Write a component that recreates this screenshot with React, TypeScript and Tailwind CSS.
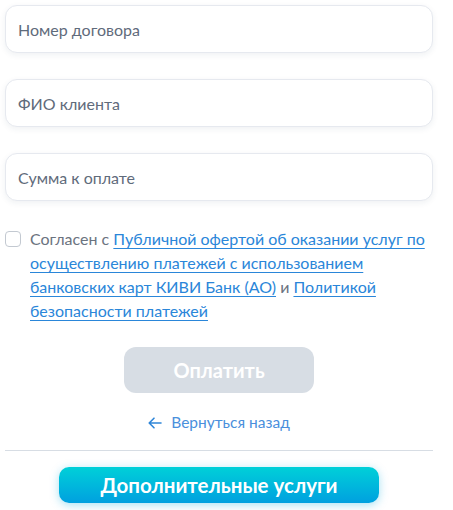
export default function App() {
  return (
    <div className="min-h-[510px] bg-white font-['Lato','Noto_Sans',sans-serif]">
      <div className="ml-[5px] w-[428px] pt-[5px]">
        <div className="flex flex-col gap-[26px]">
          {['Номер договора', 'ФИО клиента', 'Сумма к оплате'].map((p) => (
            <input
              key={p}
              placeholder={p}
              className="h-[48px] w-full rounded-[12px] border border-[#e6e9ef] bg-white px-[12px] text-[16px] text-[#334155] shadow-[0_2px_6px_rgba(30,50,90,0.07)] outline-none placeholder:text-[#5f6b7b]"
            />
          ))}
        </div>

        <label className="mt-[26px] flex items-start gap-[9px] text-[16px] leading-[24px] text-[#6b7380]">
          <span className="mt-[4px] h-[16px] w-[16px] shrink-0 rounded-[4px] border border-[#c3c9d1] bg-white" />
          <span>
            Согласен с{' '}
            <a href="#" className="text-[#2a86d9] underline underline-offset-[3px]">
              Публичной офертой об оказании услуг по осуществлению платежей с использованием банковских карт КИВИ Банк (АО)
            </a>{' '}
            и{' '}
            <a href="#" className="text-[#2a86d9] underline underline-offset-[3px]">
              Политикой безопасности платежей
            </a>
          </span>
        </label>

        <div className="mt-[24px] flex justify-center">
          <button className="h-[46px] w-[190px] rounded-[12px] bg-[#d7dde4] text-[20px] font-bold text-white">
            Оплатить
          </button>
        </div>

        <div className="mt-[18px] flex items-center justify-center gap-[9px] text-[15.5px] text-[#4a8fdc]">
          <svg width="14" height="12" viewBox="0 0 14 12" fill="none" stroke="#2f86d8" strokeWidth="1.6" strokeLinecap="round" strokeLinejoin="round">
            <path d="M13 6H1.5M6 1.2 1.2 6 6 10.8" />
          </svg>
          <span>Вернуться назад</span>
        </div>

        <div className="mt-[16px] h-px bg-[#d7dde4]" />

        <div className="mt-[16px] flex justify-center">
          <button className="h-[36px] w-[320px] rounded-[10px] bg-gradient-to-b from-[#00d0d8] to-[#00a0df] text-[20.5px] font-bold text-white shadow-[0_2px_10px_rgba(0,170,220,0.35)]">
            Дополнительные услуги
          </button>
        </div>
      </div>
    </div>
  );
}
